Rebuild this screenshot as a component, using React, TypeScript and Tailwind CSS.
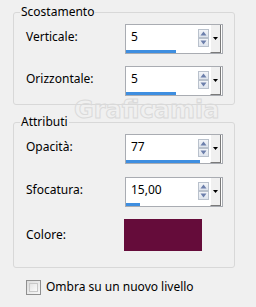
import React from "react";

function SpinArrows() {
  return (
    <div className="flex flex-col gap-[0px] mr-[1px] mt-[4px]">
      <svg width="11" height="9" viewBox="0 0 11 9">
        <defs>
          <linearGradient id="sg1" x1="0" y1="0" x2="0" y2="1">
            <stop offset="0" stopColor="#f4f6f9" />
            <stop offset="1" stopColor="#dde3ec" />
          </linearGradient>
        </defs>
        <rect x="0.5" y="0.5" width="10" height="8" fill="url(#sg1)" stroke="#b9c1cc" />
        <path d="M2.5 6.5 L5.5 2.5 L8.5 6.5 Z" fill="#6c7fab" />
      </svg>
      <svg width="11" height="9" viewBox="0 0 11 9">
        <rect x="0.5" y="0.5" width="10" height="8" fill="url(#sg1)" stroke="#b9c1cc" />
        <path d="M2.5 2.5 L5.5 6.5 L8.5 2.5 Z" fill="#6c7fab" />
      </svg>
    </div>
  );
}

function SpinBox({ value, pct }: { value: string; pct: number }) {
  return (
    <div className="w-[98px] h-[30px] border border-[#a9acb2] bg-white flex">
      <div className="flex-1 flex flex-col overflow-hidden">
        <div className="h-[25px] flex">
          <div className="flex-1 pl-[5px] pt-[4px] text-[12px] leading-[16px] text-black">{value}</div>
          <SpinArrows />
        </div>
        <div className="h-[3px]">
          <div className="h-[3px] bg-[#3e8ee0]" style={{ width: `${Math.round(pct * 96)}px` }} />
        </div>
      </div>
      <div className="w-[11px] h-[28px] mr-[1px] bg-[#f0f0f0] border-r border-b border-r-[#7a7a7a] border-b-[#7a7a7a] border-l border-l-white flex items-center justify-center">
        <svg width="5" height="3" viewBox="0 0 5 3">
          <path d="M0 0 L5 0 L2.5 3 Z" fill="#000" />
        </svg>
      </div>
    </div>
  );
}

function Row({ label, children }: { label: string; children: React.ReactNode }) {
  return (
    <div className="flex items-start">
      <div className="w-[105px] pl-[6px] pt-[5px] text-[12px] leading-[16px] text-black">{label}</div>
      {children}
    </div>
  );
}

export default function App() {
  return (
    <div className="relative w-[256px] h-[307px] bg-[#f0f0f0] overflow-hidden font-['Noto_Sans',sans-serif] text-black">
      <fieldset className="ml-[13px] mt-[4px] w-[222px] border border-[#d8d8d8] rounded-[3px] px-[6px] pt-[4px] pb-[8px]">
        <legend className="px-[1px] text-[12px] leading-[16px]">Scostamento</legend>
        <div className="flex flex-col gap-[12px]">
          <Row label="Verticale:">
            <SpinBox value="5" pct={0.525} />
          </Row>
          <Row label="Orizzontale:">
            <SpinBox value="5" pct={0.525} />
          </Row>
        </div>
      </fieldset>
      <fieldset className="ml-[13px] mt-[9px] w-[222px] border border-[#d8d8d8] rounded-[3px] px-[6px] pt-[4px] pb-[16px]">
        <legend className="px-[1px] text-[12px] leading-[16px]">Attributi</legend>
        <div className="flex flex-col gap-[13px]">
          <Row label="Opacità:">
            <SpinBox value="77" pct={0.77} />
          </Row>
          <Row label="Sfocatura:">
            <SpinBox value="15,00" pct={0.15} />
          </Row>
          <div className="flex items-center -mt-[1px]">
            <div className="w-[104px] pl-[6px] text-[12px] leading-[16px]">Colore:</div>
            <div className="w-[78px] h-[32px] bg-[#650c3a]" />
          </div>
        </div>
      </fieldset>
      <div className="flex items-center ml-[26px] mt-[11px] gap-[5px]">
        <div className="w-[15px] h-[15px] border border-[#8f8f8f] bg-gradient-to-br from-[#dcdcdc] to-[#f7f7f7] p-[2px]">
          <div className="w-full h-full border border-[#c8c8c8] bg-gradient-to-br from-[#e4e4e4] to-[#fafafa]" />
        </div>
        <span className="text-[12px] leading-[16px]">Ombra su un nuovo livello</span>
      </div>
      <div className="absolute left-[74px] top-[98px] text-[24px] leading-[24px] font-['DejaVu_Sans',sans-serif] font-bold text-transparent [-webkit-text-stroke:1px_#dadada] tracking-[0px] pointer-events-none">
        Graficamia
      </div>
    </div>
  );
}
